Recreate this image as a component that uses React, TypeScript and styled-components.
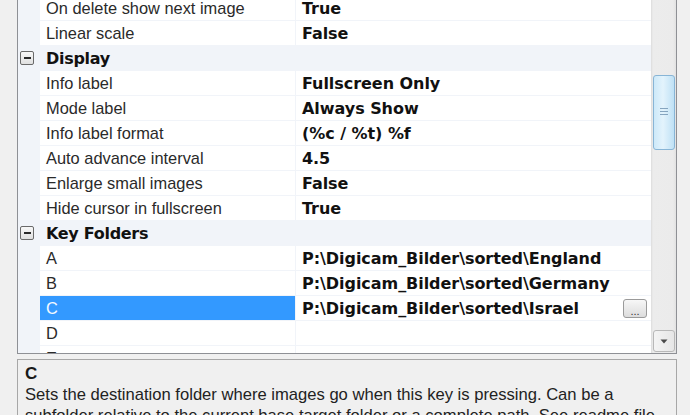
import React from "react";
import styled, { createGlobalStyle } from "styled-components";

const Global = createGlobalStyle`
  html, body { margin: 0; padding: 0; }
  body {
    background: #f0f0f0;
    width: 690px;
    height: 415px;
    overflow: hidden;
    font-family: "Liberation Sans", Arial, sans-serif;
  }
`;

const LINE = "#f1f4f9";

const Page = styled.div`
  display: flex;
  flex-direction: column;
  gap: 5px;
  padding: 0 13px 0 17px;
  height: 415px;
  box-sizing: border-box;
`;

const Grid = styled.div`
  display: flex;
  height: 354px;
  flex: none;
  box-sizing: border-box;
  border: 1px solid #8e9095;
  border-top: none;
  background: #fff;
`;

const Rows = styled.div`
  flex: 1;
  overflow: hidden;
  display: flex;
  flex-direction: column;
`;

const RowList = styled.div`
  margin-top: -4px;
  display: flex;
  flex-direction: column;
`;

const Row = styled.div`
  display: flex;
  height: 25px;
  flex: none;
  box-sizing: border-box;
  border-bottom: 1px solid ${LINE};
`;

const Margin = styled.div`
  width: 22px;
  flex: none;
  background: ${LINE};
  display: flex;
  align-items: center;
  padding-left: 2px;
  box-sizing: border-box;
`;

const Name = styled.div<{ $sel?: boolean }>`
  width: 256px;
  flex: none;
  box-sizing: border-box;
  padding-left: 6px;
  display: flex;
  align-items: center;
  font-size: 16.4px;
  color: ${(p) => (p.$sel ? "#f4f9ff" : "#2a2a2a")};
  background: ${(p) => (p.$sel ? "#3399ff" : "#fff")};
  border-right: 1px solid ${LINE};
  white-space: nowrap;
`;

const Value = styled.div`
  flex: 1;
  display: flex;
  align-items: center;
  padding-left: 6px;
  padding-right: 4px;
  font-family: "DejaVu Sans", Verdana, sans-serif;
  font-weight: bold;
  font-size: 16px;
  letter-spacing: -0.05px;
  color: #111;
  white-space: nowrap;
`;

const CategoryRow = styled(Row)`
  background: ${LINE};
`;

const CategoryLabel = styled.div`
  padding-left: 6px;
  display: flex;
  align-items: center;
  font-family: "DejaVu Sans", Verdana, sans-serif;
  font-weight: bold;
  font-size: 16px;
  letter-spacing: -0.3px;
  color: #111;
`;

const Toggle = styled.div`
  width: 14px;
  height: 14px;
  box-sizing: border-box;
  border: 1.5px solid #6a6a6a;
  border-radius: 2px;
  background: linear-gradient(#f8f8f8, #e0e0e0);
  display: flex;
  align-items: center;
  justify-content: center;
  &::after {
    content: "";
    width: 7px;
    height: 2px;
    background: #2a2a2a;
  }
`;

const Ellipsis = styled.div`
  margin-left: auto;
  width: 24px;
  height: 19px;
  box-sizing: border-box;
  border: 1px solid #9a9a9a;
  border-radius: 3px;
  background: linear-gradient(#f7f7f7, #dcdcdc);
  font-family: "Liberation Sans", Arial, sans-serif;
  font-weight: normal;
  font-size: 11px;
  color: #333;
  display: flex;
  align-items: flex-end;
  justify-content: center;
  line-height: 12px;
  letter-spacing: 0;
`;

const ScrollBar = styled.div`
  width: 25px;
  flex: none;
  background: linear-gradient(90deg, #dcdcdc 0, #ececec 2px, #ebebeb 22px, #e2e2e2 25px);
  display: flex;
  flex-direction: column;
  align-items: center;
  padding-left: 1px;
  box-sizing: border-box;
`;

const TrackGap = styled.div<{ $h?: number }>`
  height: ${(p) => (p.$h != null ? `${p.$h}px` : "auto")};
  flex: ${(p) => (p.$h != null ? "none" : "1")};
`;

const Thumb = styled.div`
  width: 22px;
  height: 75px;
  box-sizing: border-box;
  border: 1px solid #88b5d6;
  border-radius: 3px;
  background: linear-gradient(90deg, #cde9f9, #e3f3fc 45%, #bfe1f5);
  display: flex;
  align-items: center;
  justify-content: center;
`;

const Grip = styled.div`
  width: 8px;
  height: 9px;
  background: repeating-linear-gradient(#6f92b0 0 1px, transparent 1px 3px);
  opacity: 0.8;
`;

const ArrowButton = styled.div`
  width: 22px;
  height: 22px;
  margin-bottom: 1px;
  box-sizing: border-box;
  border: 1px solid #b8b8b8;
  border-radius: 3px;
  background: linear-gradient(90deg, #f4f4f4, #e6e6e6);
  display: flex;
  align-items: center;
  justify-content: center;
`;

const Description = styled.div`
  flex: 1;
  box-sizing: border-box;
  border: 1px solid #a7a7a7;
  border-bottom: none;
  padding: 3px 7px 0 7px;
  overflow: hidden;
  color: #222;
`;

const DescTitle = styled.div`
  font-weight: bold;
  font-size: 17px;
  line-height: 21px;
  color: #1a1a1a;
`;

const DescText = styled.div`
  font-size: 16.6px;
  line-height: 21px;
`;

type Item =
  | { kind: "cat"; label: string }
  | { kind: "prop"; name: string; value: string; selected?: boolean };

const items: Item[] = [
  { kind: "prop", name: "On delete show next image", value: "True" },
  { kind: "prop", name: "Linear scale", value: "False" },
  { kind: "cat", label: "Display" },
  { kind: "prop", name: "Info label", value: "Fullscreen Only" },
  { kind: "prop", name: "Mode label", value: "Always Show" },
  { kind: "prop", name: "Info label format", value: "(%c / %t) %f" },
  { kind: "prop", name: "Auto advance interval", value: "4.5" },
  { kind: "prop", name: "Enlarge small images", value: "False" },
  { kind: "prop", name: "Hide cursor in fullscreen", value: "True" },
  { kind: "cat", label: "Key Folders" },
  { kind: "prop", name: "A", value: "P:\\Digicam_Bilder\\sorted\\England" },
  { kind: "prop", name: "B", value: "P:\\Digicam_Bilder\\sorted\\Germany" },
  { kind: "prop", name: "C", value: "P:\\Digicam_Bilder\\sorted\\Israel", selected: true },
  { kind: "prop", name: "D", value: "" },
  { kind: "prop", name: "E", value: "" },
];

export default function App() {
  return (
    <>
      <Global />
      <Page>
        <Grid>
          <Rows>
            <RowList>
              {items.map((it, i) =>
                it.kind === "cat" ? (
                  <CategoryRow key={i}>
                    <Margin>
                      <Toggle />
                    </Margin>
                    <CategoryLabel>{it.label}</CategoryLabel>
                  </CategoryRow>
                ) : (
                  <Row key={i}>
                    <Margin />
                    <Name $sel={it.selected}>{it.name}</Name>
                    <Value>
                      {it.value}
                      {it.selected && <Ellipsis>...</Ellipsis>}
                    </Value>
                  </Row>
                )
              )}
            </RowList>
          </Rows>
          <ScrollBar>
            <TrackGap $h={75} />
            <Thumb>
              <Grip />
            </Thumb>
            <TrackGap />
            <ArrowButton>
              <svg width="8" height="5" viewBox="0 0 8 5">
                <path d="M0.5 0.5 L7.5 0.5 L4 4.5 Z" fill="#4a4a4a" />
              </svg>
            </ArrowButton>
          </ScrollBar>
        </Grid>
        <Description>
          <DescTitle>C</DescTitle>
          <DescText>
            Sets the destination folder where images go when this key is pressing. Can be a
            subfolder relative to the current base target folder or a complete path. See readme file for details.
          </DescText>
        </Description>
      </Page>
    </>
  );
}
